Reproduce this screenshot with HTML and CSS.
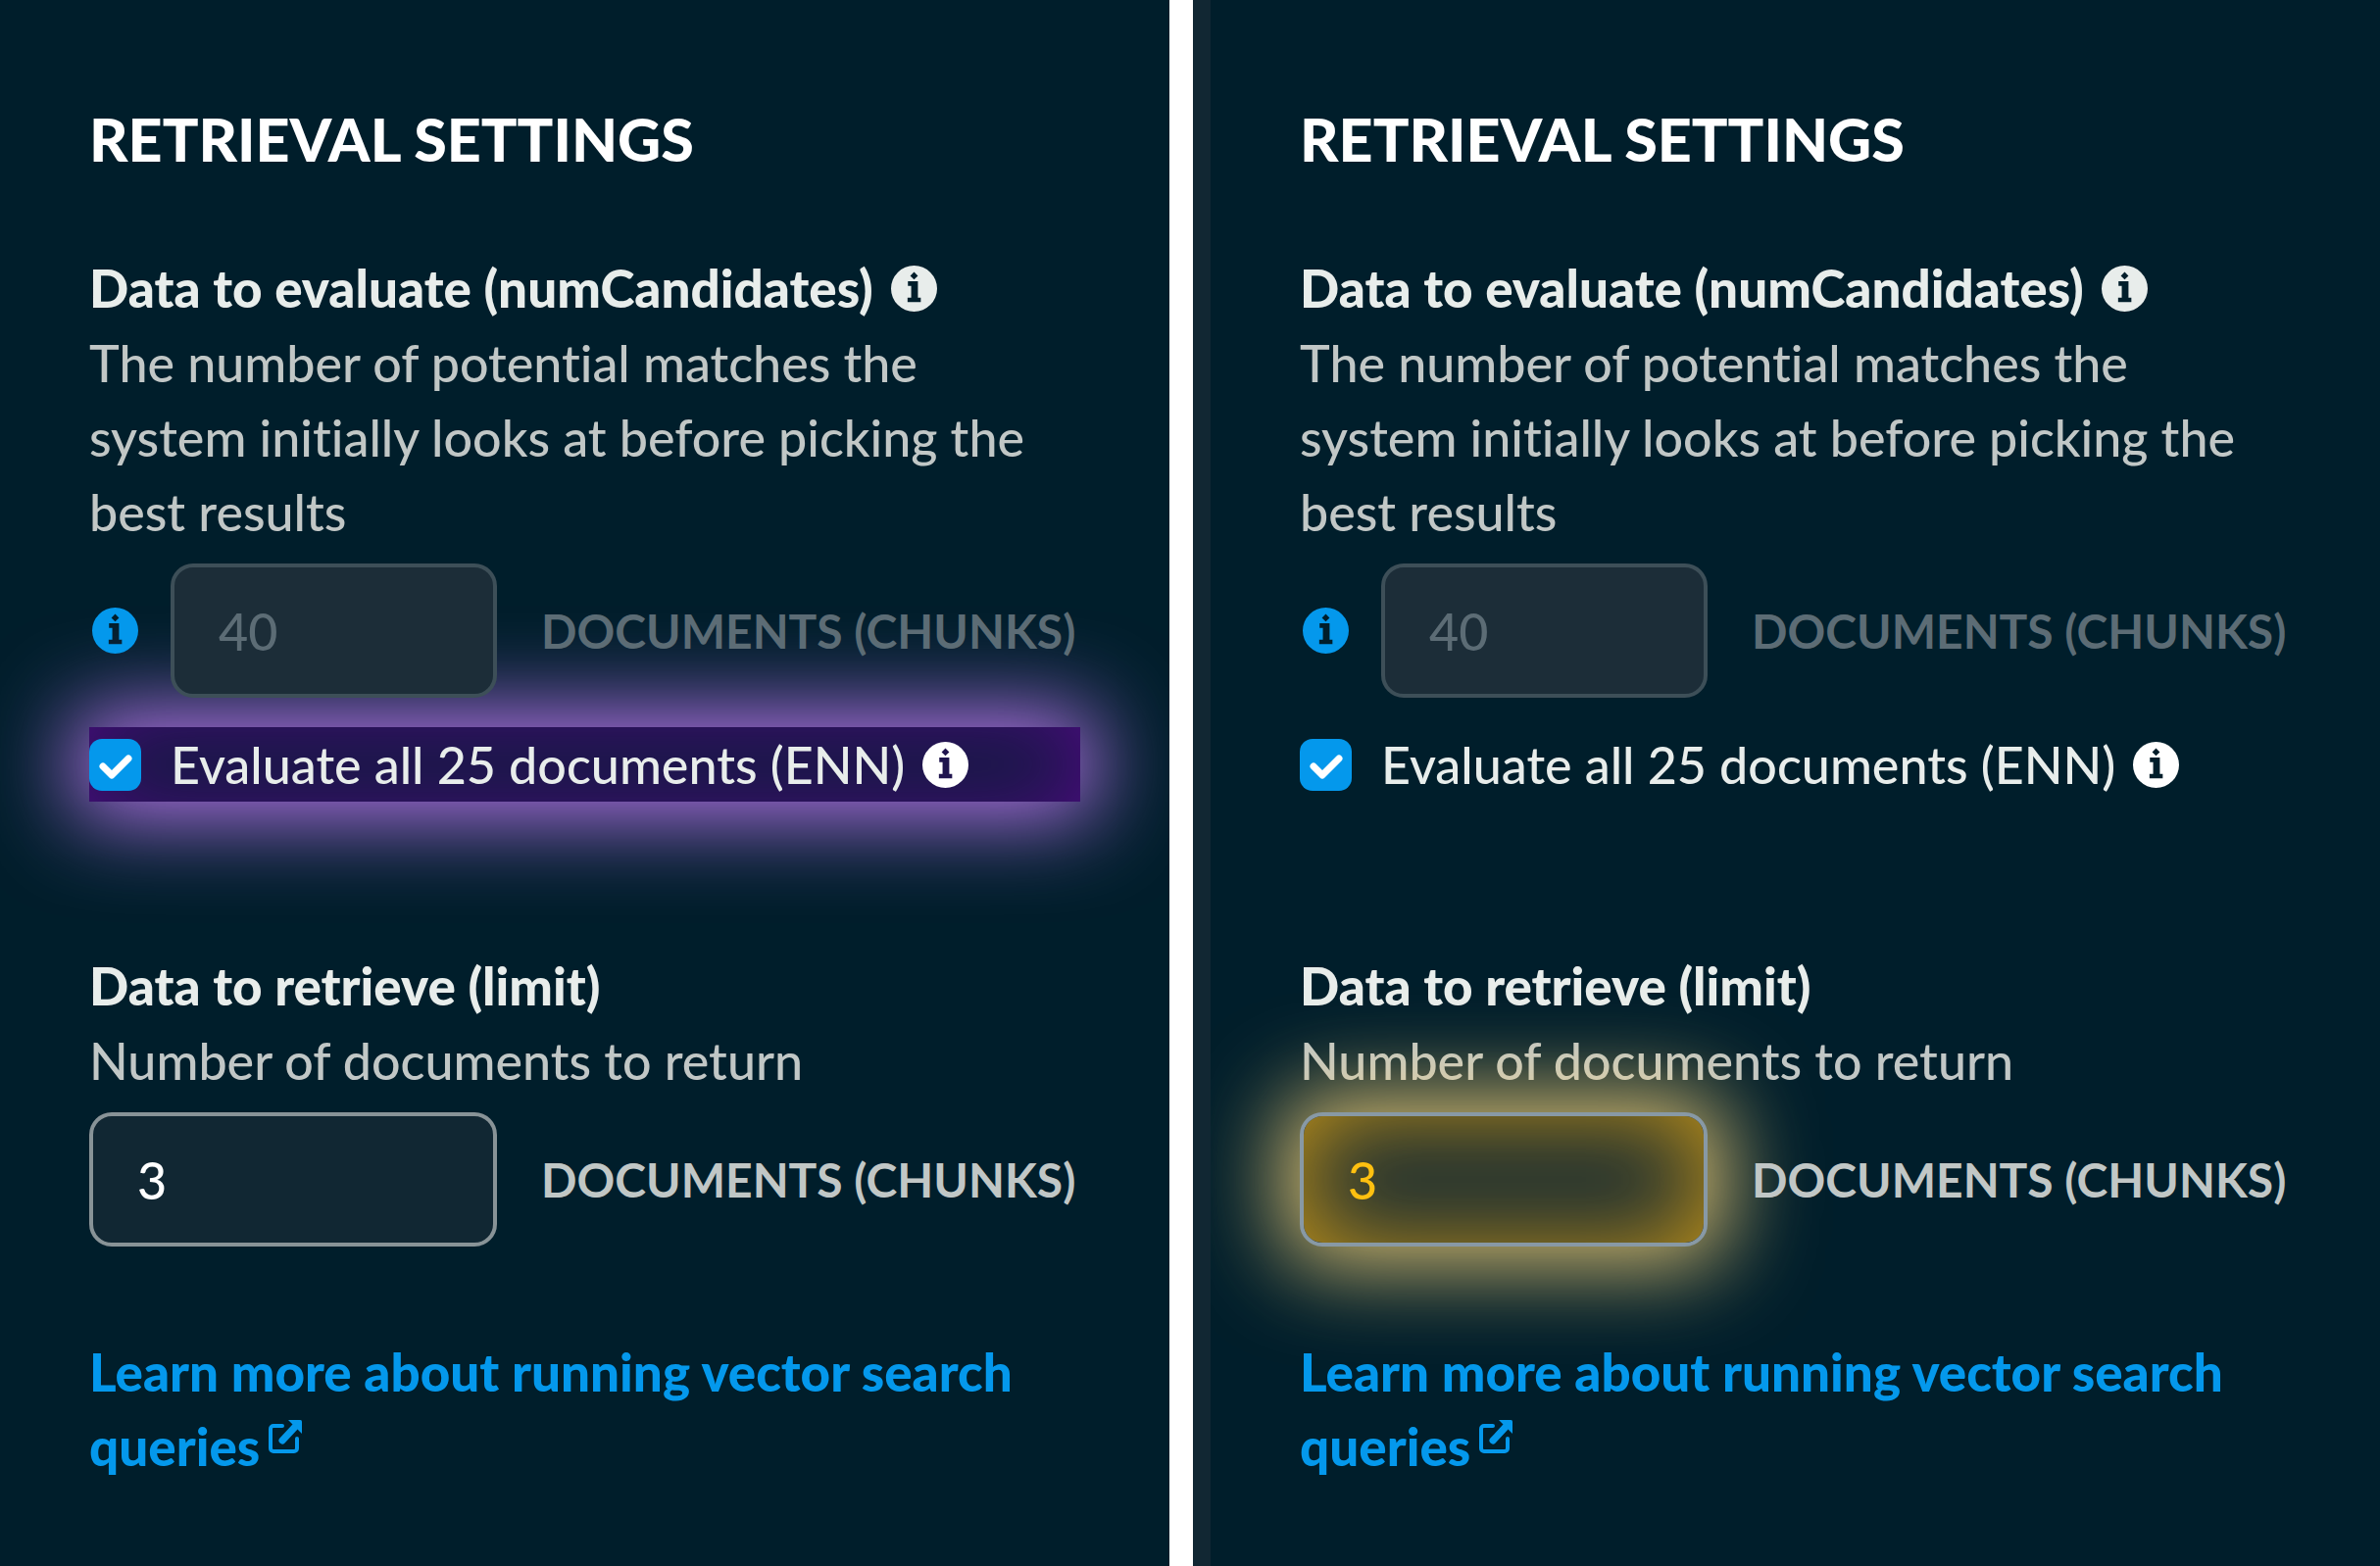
FILE: index.html
```html
<!DOCTYPE html>
<html lang="en">
<head>
  <meta charset="utf-8">
  <meta name="viewport" content="width=device-width, initial-scale=1">
  <title>Retrieval Settings</title>
  <link rel="stylesheet" href="styles.css">
</head>
<body>
  <!-- shared icons -->
  <svg class="sprite" aria-hidden="true">
    <symbol id="info" viewBox="0 0 24 24">
      <path fill="currentColor" fill-rule="evenodd" d="M12 0a12 12 0 1 0 0 24a12 12 0 0 0 0-24zM12 3.300l2 2l-2 2l-2-2zM8.800 8.200h5.200v8.500h1.500v2.300H8.600v-2.300h1.900v-6.100H8.800z"/>
    </symbol>
    <symbol id="external" viewBox="0 0 34 34">
      <path fill="none" stroke="currentColor" stroke-width="4" stroke-linecap="round" stroke-linejoin="round" d="M14 6H5a3 3 0 0 0-3 3v20a3 3 0 0 0 3 3h21a3 3 0 0 0 3-3V19"/>
      <path fill="none" stroke="currentColor" stroke-width="7" stroke-linecap="round" d="M14 21L27 7"/>
      <path fill="currentColor" d="M20 0h12.500a1.500 1.500 0 0 1 1.500 1.500V14z"/>
    </symbol>
  </svg>

  <main class="panels">
    <section class="panel">
      <h2>RETRIEVAL SETTINGS</h2>
      <div class="setting">
        <label class="title" for="candidates-a">Data to evaluate (numCandidates) <svg class="info"><use href="#info"/></svg></label>
        <p>The number of potential matches the<br>system initially looks at before picking the best results</p>
        <div class="row">
          <svg class="info blue"><use href="#info"/></svg>
          <input class="number" id="candidates-a" type="text" value="40" disabled>
          <span class="unit">DOCUMENTS (CHUNKS)</span>
        </div>
        <div class="check glow-purple">
          <input id="enn-a" type="checkbox" checked>
          <label for="enn-a">Evaluate all 25 documents (ENN) <svg class="info"><use href="#info"/></svg></label>
        </div>
      </div>
      <div class="setting">
        <label class="title" for="limit-a">Data to retrieve (limit)</label>
        <p>Number of documents to return</p>
        <div class="row">
          <input class="number wide" id="limit-a" type="text" value="3">
          <span class="unit">DOCUMENTS (CHUNKS)</span>
        </div>
      </div>
      <a href="#">Learn more about running vector search queries<svg class="external"><use href="#external"/></svg></a>
    </section>

    <section class="panel edge">
      <h2>RETRIEVAL SETTINGS</h2>
      <div class="setting">
        <label class="title" for="candidates-b">Data to evaluate (numCandidates) <svg class="info"><use href="#info"/></svg></label>
        <p>The number of potential matches the<br>system initially looks at before picking the best results</p>
        <div class="row">
          <svg class="info blue"><use href="#info"/></svg>
          <input class="number" id="candidates-b" type="text" value="40" disabled>
          <span class="unit">DOCUMENTS (CHUNKS)</span>
        </div>
        <div class="check">
          <input id="enn-b" type="checkbox" checked>
          <label for="enn-b">Evaluate all 25 documents (ENN) <svg class="info"><use href="#info"/></svg></label>
        </div>
      </div>
      <div class="setting">
        <label class="title" for="limit-b">Data to retrieve (limit)</label>
        <p>Number of documents to return</p>
        <div class="row">
          <input class="number wide glow-yellow" id="limit-b" type="text" value="3">
          <span class="unit">DOCUMENTS (CHUNKS)</span>
        </div>
      </div>
      <a href="#">Learn more about running vector search queries<svg class="external"><use href="#external"/></svg></a>
    </section>
  </main>
</body>
</html>
```
FILE: styles.css
```css
*{
  margin: 0;
  padding: 0;
}
body{
  background: white;
  font-family: Lato, sans-serif;
  font-size: 52px;
  font-weight: 500;
  font-variant-ligatures: none;
  line-height: 76px;
  color: #e8edeb;
}
.sprite{
  position: absolute;
  width: 0;
  height: 0;
}
.panels{
  display: flex;
  gap: 24px;
  min-height: 100vh;
}
.panel{
  flex: 1;
  min-width: 0;
  padding: 104px 91px 0;
  background: #001e2b;
  overflow: hidden;
}
.edge{
  border-left: 18px solid #112733;
}
h2{
  font-size: 61px;
  font-weight: 900;
  color: white;
  margin-bottom: 76px;
}
.setting + .setting{
  margin-top: 150px;
}
.title{
  display: flex;
  align-items: center;
  gap: 18px;
  font-size: 53px;
  font-weight: 900;
}
p{
  color: #c1c7c6;
}
.info{
  flex: none;
  width: 47px;
  height: 47px;
  color: white;
}
.title .info{
  color: #e8edeb;
}
.info.blue{
  color: #0498ec;
  margin: 0 33px 0 3px;
}
.row{
  display: flex;
  align-items: center;
  position: relative;
  z-index: 1;
  margin-top: 15px;
}
.number{
  box-sizing: border-box;
  width: 333px;
  height: 137px;
  padding: 0 45px;
  border: 4px solid #889397;
  border-radius: 23px;
  background: #112733;
  color: white;
  font: inherit;
}
.number.wide{
  width: 416px;
}
.number:disabled{
  background: #1c2d38;
  border-color: #3d4f58;
  color: #5c6c75;
}
.unit{
  margin-left: 45px;
  font-size: 48px;
  font-weight: 700;
  color: #c1c7c6;
  white-space: nowrap;
}
.number:disabled + .unit{
  color: #5c6c75;
}
.check{
  display: flex;
  align-items: center;
  gap: 30px;
  margin-top: 30px;
}
.check label{
  display: flex;
  align-items: center;
  gap: 18px;
}
.check input{
  appearance: none;
  width: 53px;
  height: 53px;
  border-radius: 13px;
  background: #0498ec url("data:image/svg+xml,%3Csvg xmlns='http://www.w3.org/2000/svg' viewBox='0 0 53 53'%3E%3Cpath d='M14 28l9 9l17-17' fill='none' stroke='white' stroke-width='7' stroke-linecap='round' stroke-linejoin='round'/%3E%3C/svg%3E");
}
.glow-purple{
  box-shadow: 0 0 90px 16px #b976ee, inset 0 0 90px #500a85;
}
.number.glow-yellow{
  border-color: #8899a5;
  color: #ffc010;
  box-shadow: 0 0 90px 20px rgba(250,214,122,0.85), inset 0 0 100px rgba(255,184,16,0.78);
}
a{
  display: block;
  margin-top: 90px;
  font-size: 53px;
  font-weight: 900;
  color: #0498ec;
  text-decoration: none;
}
.external{
  width: 34px;
  height: 34px;
  margin-left: 9px;
  vertical-align: 13px;
}
```
